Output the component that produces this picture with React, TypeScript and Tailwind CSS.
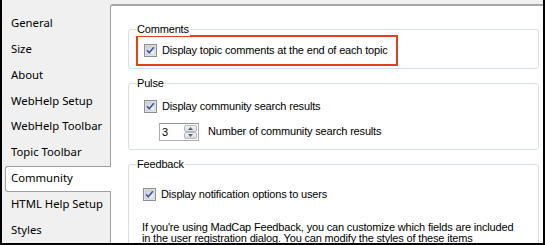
import React from 'react';

const TABS = [
  'General',
  'Size',
  'About',
  'WebHelp Setup',
  'WebHelp Toolbar',
  'Topic Toolbar',
  'Community',
  'HTML Help Setup',
  'Styles',
];

/** Windows 7 style checked checkbox, 13x13. */
function CheckBox() {
  return (
    <svg width="13" height="13" viewBox="0 0 13 13" className="shrink-0 block">
      <defs>
        <linearGradient id="cbFill" x1="0" y1="0" x2="1" y2="1">
          <stop offset="0" stopColor="#cbcfd5" />
          <stop offset="1" stopColor="#f6f6f6" />
        </linearGradient>
      </defs>
      <rect x="0.5" y="0.5" width="12" height="12" fill="#f4f4f4" stroke="#8f8f8f" />
      <rect x="2" y="2" width="9" height="9" fill="url(#cbFill)" stroke="#aeb3b9" strokeWidth="0.6" />
      <path d="M3.2 6.4 L5.3 8.7 L9.8 3.3" fill="none" stroke="#3b5aa8" strokeWidth="1.7" />
    </svg>
  );
}

function Spinner({ value }: { value: string }) {
  return (
    <div className="w-[40px] h-[18px] flex border border-[#abadb3] border-t-[#8f949b] bg-white">
      <span className="flex-1 pl-[2px] leading-[16px]">{value}</span>
      <div className="w-[15px] flex flex-col p-px">
        <div className="flex-1 flex items-center justify-center border border-[#b5b8bd] rounded-[2px] bg-gradient-to-b from-[#f4f4f4] to-[#dcdcdc]">
          <svg width="5" height="3" viewBox="0 0 5 3"><path d="M0 3 L2.5 0 L5 3Z" fill="#4d6185" /></svg>
        </div>
        <div className="flex-1 flex items-center justify-center border border-[#b5b8bd] rounded-[2px] bg-gradient-to-b from-[#f4f4f4] to-[#dcdcdc]">
          <svg width="5" height="3" viewBox="0 0 5 3"><path d="M0 0 L2.5 3 L5 0Z" fill="#4d6185" /></svg>
        </div>
      </div>
    </div>
  );
}

// group box: the caption sits over the top border
function Group({ title, className, children }: { title: string; className?: string; children: React.ReactNode }) {
  return (
    <div className={`relative shrink-0 border border-[#d5dfe5] rounded-[3px] pl-[7px] ${className ?? ''}`}>
      <span className="absolute left-[7px] -top-[7px] px-px leading-[13px] bg-white">{title}</span>
      {children}
    </div>
  );
}

export default function App() {
  return (
    <div className="w-[545px] h-[245px] overflow-hidden bg-[#f0f0f0] border-x-2 border-b-2 border-black flex text-black">
      <div className="w-[108px] shrink-0 pt-[11px] flex flex-col font-['Noto_Sans',sans-serif] text-[11.3px]">
        {TABS.map(tab =>
          tab === 'Community' ? (
            <div
              key={tab}
              className="relative z-10 shrink-0 h-[26px] ml-[3px] -mr-px pl-[5px] flex items-center bg-white border border-r-0 border-[#a0a0a0] rounded-l-[3px]"
            >
              {tab}
            </div>
          ) : (
            <div key={tab} className="shrink-0 h-[25.75px] pl-[9px] flex items-center">
              {tab}
            </div>
          ),
        )}
      </div>

      <div className="flex-1 min-w-0 mt-[4px] bg-white border-t-2 border-l border-t-[#a5a5a5] border-l-[#a0a0a0] rounded-tl-[3px] pl-[17px] pr-[4px] pt-[23px] flex flex-col font-['Liberation_Sans',sans-serif] text-[11px] tracking-[-0.17px] whitespace-nowrap">
        <Group title="Comments" className="h-[40px] pt-[5px]">
          <div className="w-[262px] h-[31px] border-2 border-[#e2401e] flex items-center gap-[5px] pl-[6px]">
            <CheckBox />
            <span>Display topic comments at the end of each topic</span>
          </div>
        </Group>

        <Group title="Pulse" className="mt-[14px] h-[67px] pt-[14px]">
          <div className="flex items-center gap-[5px] pl-[8px]">
            <CheckBox />
            <span>Display community search results</span>
          </div>
          <div className="flex items-center gap-[9px] pl-[23px] mt-[8px]">
            <Spinner value="3" />
            <span>Number of community search results</span>
          </div>
        </Group>

        <Group title="Feedback" className="mt-[14px] h-[120px] pt-[21px]">
          <div className="flex items-center gap-[5px] pl-[7px]">
            <CheckBox />
            <span>Display notification options to users</span>
          </div>
          <p className="pl-[6px] mt-[19px] leading-[11px]">
            If you're using MadCap Feedback, you can customize which fields are included
            <br />
            in the user registration dialog. You can modify the styles of these items
          </p>
        </Group>
      </div>
    </div>
  );
}
